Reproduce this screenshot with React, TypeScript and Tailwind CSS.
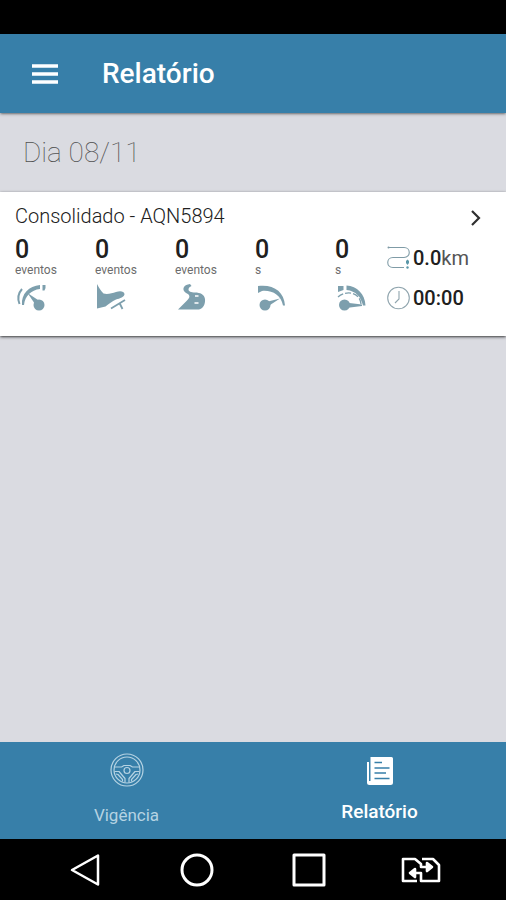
import type { ReactNode } from "react";

interface Stat {
  id: string;
  value: string;
  unit: string;
  icon: ReactNode;
}

const STATS: Stat[] = [
  { id: "acceleration", value: "0", unit: "eventos", icon: <AccelerationIcon /> },
  { id: "braking", value: "0", unit: "eventos", icon: <BrakingIcon /> },
  { id: "curves", value: "0", unit: "eventos", icon: <RoadIcon /> },
  { id: "speeding", value: "0", unit: "s", icon: <SpeedIcon /> },
  { id: "rpm", value: "0", unit: "s", icon: <RpmIcon /> },
];

function AccelerationIcon() {
  return (
    <svg width="32" height="28" viewBox="0 0 32 28" fill="currentColor">
      <path d="M4.500 20C2.500 15 3.500 9 7 5" fill="none" stroke="currentColor" strokeWidth="2" />
      <path d="M7 21C6 10 14 2 25 1V5C16 6 10 12 9 21Z" />
      <path d="M27.500 1H30.500V4L29.500 6.500H27.500Z" />
      <path d="M12.500 9L23 16L20 20Z" />
      <circle cx="24" cy="21" r="5.500" />
    </svg>
  );
}

function BrakingIcon() {
  return (
    <svg width="32" height="28" viewBox="0 0 32 28" fill="currentColor">
      <path d="M2 0C4 4 6 7 8.500 9.500C12 10.500 17 9.500 21 8C25 6.500 29 7 29.500 10C29.500 13 25 14.500 21 15.500C17 17 14 20 10.500 22.500L2 24.500Z" />
      <path d="M16 24.500L30 16M24.500 19L27.500 25" fill="none" stroke="currentColor" strokeWidth="1.8" />
    </svg>
  );
}

function RoadIcon() {
  return (
    <svg width="32" height="28" viewBox="0 0 32 28" fill="currentColor">
      <path d="M15 0C9 1 7.500 4 9 7C10 9 13 9.500 14 11C15 13 14 14.500 12 16.500L3 25.500H24C28 25 30.500 20 30 15C29.500 10.500 25 8.500 20 8.500C16 8.500 13.500 7.500 13.500 5.500C13.500 4 14.500 3 16.500 2Z" />
      <path d="M20 12H23.500M19.500 19H23.500" fill="none" stroke="#fff" strokeWidth="1.4" />
    </svg>
  );
}

function SpeedIcon() {
  return (
    <svg width="32" height="28" viewBox="0 0 32 28" fill="currentColor">
      <path d="M3 2C18 0 29 7 30 21.500H28C26 11 17 6 7 7L3 9Z" />
      <path d="M11 18L25 14.500L12 23Z" />
      <circle cx="10" cy="21" r="5.500" />
    </svg>
  );
}

function RpmIcon() {
  return (
    <svg width="32" height="28" viewBox="0 0 32 28" fill="currentColor">
      <path d="M3 2H8.500V6L3 8Z" />
      <path d="M11.500 1.500C22 2 30 10 30.500 21.500H28C26 13 21 7 11.500 6Z" />
      <path d="M3 13C11 6 25 8 26 20" fill="none" stroke="currentColor" strokeWidth="1.3" strokeDasharray="6 2" />
      <path d="M10 18.500L27 20.500V22L11 24Z" />
      <circle cx="9.500" cy="21" r="5.500" />
    </svg>
  );
}

function RouteIcon() {
  return (
    <svg width="24" height="24" viewBox="0 0 24 24" fill="none" stroke="#7f9ba6" strokeWidth="1.1">
      <path d="M2 1.500H17C24 1.500 24 11.500 17 11.500H6C-1 11.500 -1 21.500 6 21.500H17" />
      <circle cx="1.500" cy="1.500" r="1" fill="#7f9ba6" stroke="none" />
      <path d="M19 15L20.500 13.500L22 15V17L20.500 19L19 17Z" fill="#5b98a9" stroke="none" />
      <circle cx="20.500" cy="21.500" r="1.200" fill="#5b98a9" stroke="none" />
    </svg>
  );
}

function ClockIcon() {
  return (
    <svg width="24" height="24" viewBox="0 0 24 24" fill="none" stroke="#90a5ae" strokeWidth="1.1">
      <circle cx="11.500" cy="12" r="10.800" />
      <path d="M12 5V13L8 17" />
    </svg>
  );
}

function WheelIcon() {
  return (
    <svg width="34" height="34" viewBox="0 0 34 34" fill="none" stroke="currentColor" strokeWidth="1.200" strokeLinejoin="round">
      <circle cx="17" cy="17" r="16" />
      <circle cx="17" cy="17" r="13" />
      <circle cx="17" cy="17.500" r="3" />
      <path d="M5 14H11.500L14 12.500H20L22.500 14H29" />
      <path d="M4.500 18.500H9L15 25.500V29.500M29.500 18.500H25L19 25.500V29.500" />
      <path d="M6 21L8 21.500L12.500 26.500V28.500M28 21L26 21.500L21.500 26.500V28.500" />
    </svg>
  );
}

function ReportIcon() {
  return (
    <svg width="28" height="30" viewBox="0 0 28 30" fill="currentColor">
      <path d="M4.500 1H25.500Q27 1 27 2.500V26.500Q27 29 24.500 29H3.500Q1 29 1 26.500V6H3V25H4.500Z" />
      <path d="M8.500 6.500H16M8.500 12H23.500M8.500 17H20M8.500 22.500H23.500" stroke="#377fa9" strokeWidth="1.500" />
    </svg>
  );
}

function StatColumn({ stat }: { stat: Stat }) {
  return (
    <li className="flex flex-col items-start">
      <span className="text-[25px] leading-7 font-medium text-[#202020]">{stat.value}</span>
      <span className="text-xs leading-3 text-[#6c6c6c]">{stat.unit}</span>
      <span className="mt-2 text-[#7d9fad]">{stat.icon}</span>
    </li>
  );
}

function SystemBar() {
  return (
    <div className="grid h-[61px] grid-cols-[repeat(4,112px)] justify-center bg-black text-white">
      <button className="flex items-center justify-center" aria-label="Voltar">
        <svg width="32" height="36" viewBox="0 0 32 36" fill="none" stroke="currentColor" strokeWidth="2.500" strokeLinejoin="round">
          <path d="M29 3.500V32.500L3 18Z" />
        </svg>
      </button>
      <button className="flex items-center justify-center" aria-label="Início">
        <svg width="36" height="36" viewBox="0 0 36 36" fill="none" stroke="currentColor" strokeWidth="3">
          <circle cx="18" cy="18" r="15" />
        </svg>
      </button>
      <button className="flex items-center justify-center" aria-label="Recentes">
        <svg width="36" height="36" viewBox="0 0 36 36" fill="none" stroke="currentColor" strokeWidth="3" strokeLinejoin="round">
          <path d="M3 3H33V33H3Z" />
        </svg>
      </button>
      <button className="flex items-center justify-center" aria-label="Trocar chip">
        <svg width="40" height="28" viewBox="0 0 40 28" fill="none" stroke="currentColor" strokeWidth="2.600" strokeLinejoin="round">
          <path d="M16 25H2V3H14L20 8V11H28" />
          <path d="M21 3H32L38 9V25H20V17H12" />
          <path d="M26 7L31 11L26 15Z" fill="currentColor" />
          <path d="M14 13L9 17L14 21Z" fill="currentColor" />
        </svg>
      </button>
    </div>
  );
}

export default function App() {
  return (
    <div className="flex min-h-screen flex-col bg-[#dadbe1] font-['Roboto',sans-serif]">
      <div className="h-[34px] bg-black" />

      <header className="z-10 flex h-[79px] items-center gap-11 bg-[#377fa9] px-8 text-white shadow-sm shadow-black/40">
        <button aria-label="Menu">
          <svg width="26" height="20" viewBox="0 0 26 20" stroke="currentColor" strokeWidth="3.500">
            <path d="M0 2H26M0 10H26M0 18H26" />
          </svg>
        </button>
        <h1 className="text-[28px] leading-9 font-medium">Relatório</h1>
      </header>

      <main className="flex-1">
        <h2 className="flex h-[79px] items-center px-[23px] text-[28px] font-thin text-[#505050]">Dia 08/11</h2>

        {/* Vehicle card */}
        <section className="bg-white px-[15px] pt-3 pb-6 shadow-sm shadow-black/60">
          <div className="flex items-center justify-between pr-2">
            <h3 className="text-xl leading-6 font-light text-[#202020]">Consolidado - AQN5894</h3>
            <button aria-label="Ver detalhes">
              <svg width="14" height="20" viewBox="0 0 14 20" fill="none" stroke="#303030" strokeWidth="2.200">
                <path d="M3 5L10 12L3 19" />
              </svg>
            </button>
          </div>
          <div className="mt-2 flex">
            <ul className="grid flex-1 grid-cols-[repeat(4,1fr)_52px]">
              {STATS.map((stat) => (
                <StatColumn key={stat.id} stat={stat} />
              ))}
            </ul>
            <div className="flex w-[104px] flex-col gap-4 pt-2.5 text-xl leading-6 text-[#555]">
              <div className="flex items-center gap-0.5">
                <RouteIcon />
                <span>
                  <b className="font-medium text-[#202020]">0.0</b>km
                </span>
              </div>
              <div className="flex items-center gap-0.5">
                <ClockIcon />
                <span className="font-medium text-[#202020]">00:00</span>
              </div>
            </div>
          </div>
        </section>
      </main>

      {/* Tabs */}
      <nav className="grid h-[97px] grid-cols-2 bg-[#377fa9] text-white">
        <button className="flex flex-col items-center pt-[11px] text-[#b5d3e3]">
          <WheelIcon />
          <span className="mt-4 text-[17px] leading-6">Vigência</span>
        </button>
        <button className="flex flex-col items-center pt-3.5">
          <ReportIcon />
          <span className="mt-3.5 text-[19px] leading-6 font-medium">Relatório</span>
        </button>
      </nav>

      <SystemBar />
    </div>
  );
}
